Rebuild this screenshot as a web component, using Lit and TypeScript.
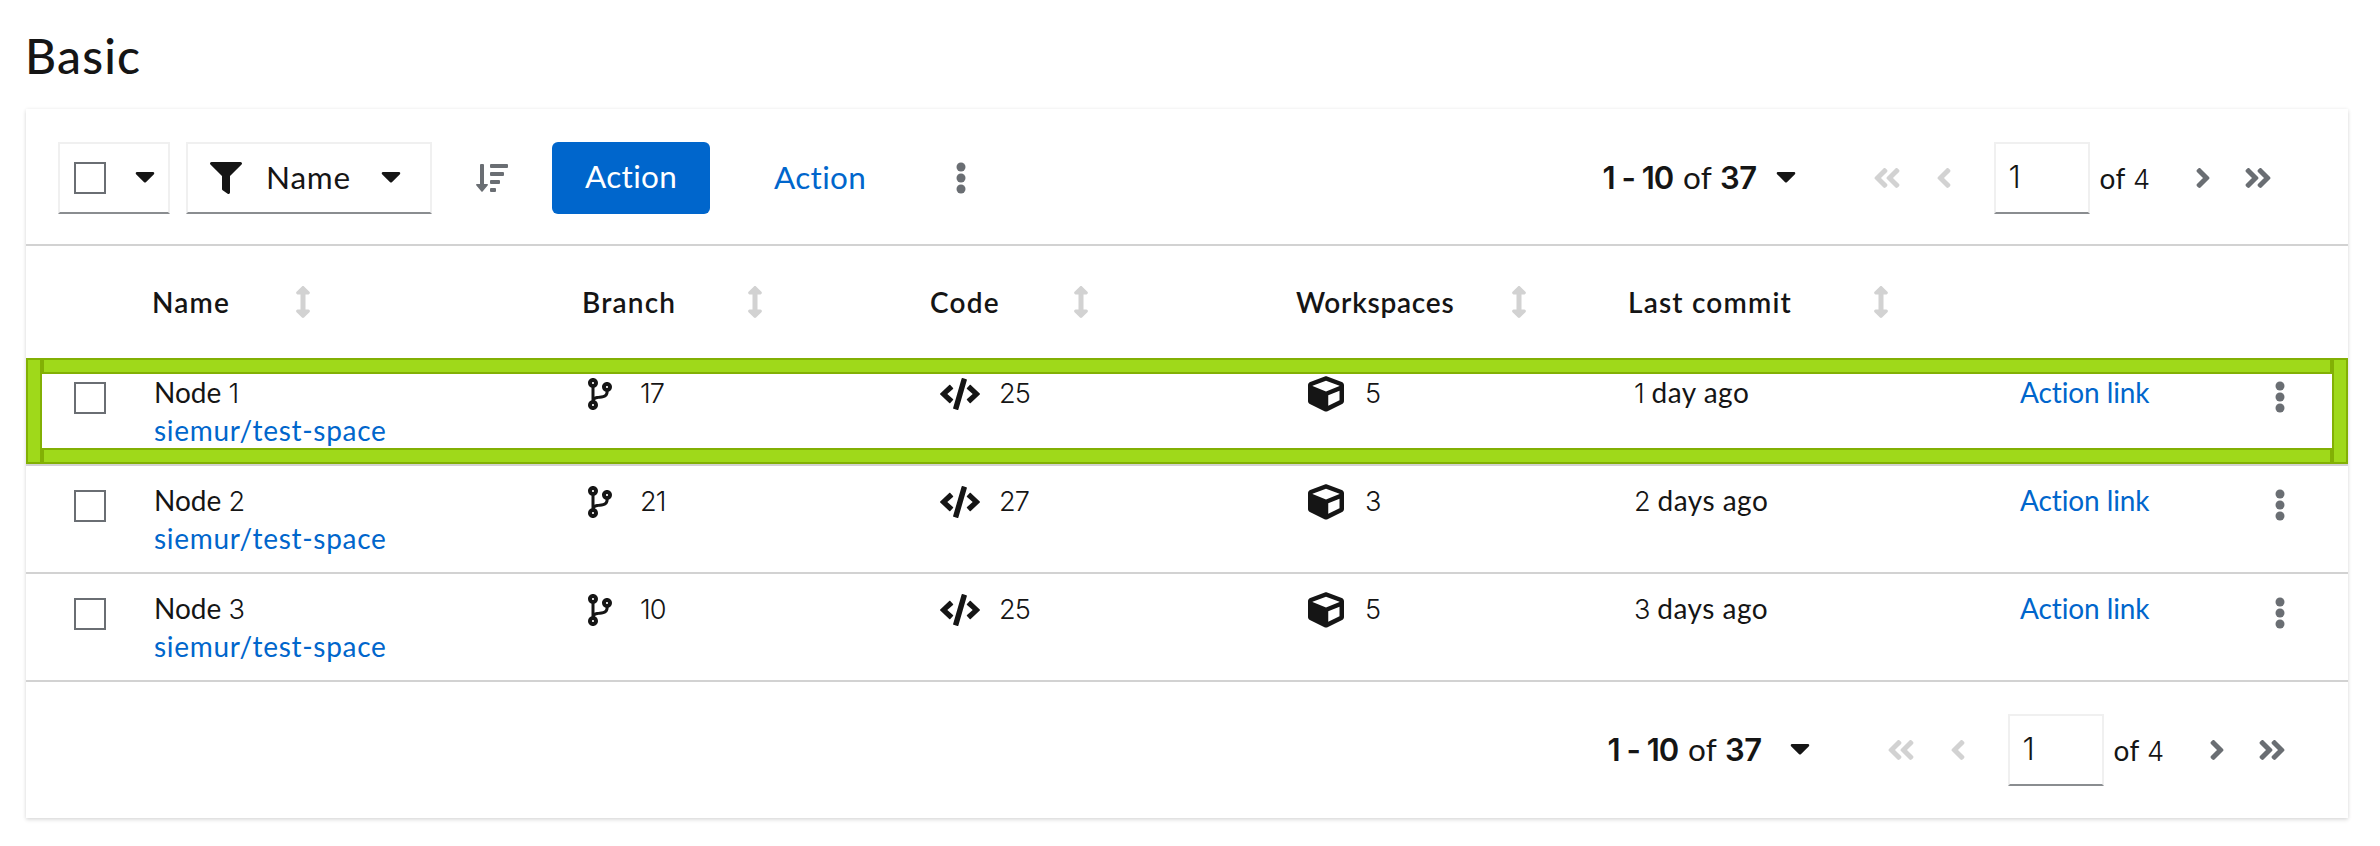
import { LitElement, html, css, svg, nothing } from 'lit';
import { customElement, property } from 'lit/decorators.js';

const ANGLE = 'M31.7 239l136-136c9.4-9.4 24.6-9.4 33.9 0l22.6 22.6c9.4 9.4 9.4 24.6 0 33.9L127.9 256l96.4 96.4c9.4 9.4 9.4 24.6 0 33.9L201.7 409c-9.4 9.4-24.6 9.4-33.9 0l-136-136c-9.5-9.4-9.5-24.6-.1-34z';

const ICONS: Record<string, { w: number; h: number; box: string; body: unknown }> = {
  caret: { w: 20, h: 32, box: '0 0 320 512', body: svg`<path d="M31.3 192h257.3c17.8 0 26.7 21.5 14.1 34.1L174.1 354.8c-7.8 7.8-20.5 7.8-28.3 0L17.2 226.1C4.6 213.5 13.5 192 31.3 192z"/>` },
  filter: { w: 32, h: 32, box: '0 0 512 512', body: svg`<path d="M487.976 0H24.028C2.71 0-8.047 25.866 7.058 40.971L192 225.941V432c0 7.831 3.821 15.17 10.237 19.662l80 55.98C298.02 518.69 320 507.493 320 487.98V225.941l184.947-184.97C520.021 25.896 509.338 0 487.976 0z"/>` },
  amount: { w: 32, h: 28, box: '0 0 32 28', body: svg`<path d="M5 0h2a1 1 0 0 1 1 1v19h3q1.6 0 .6 1.4l-5 6q-.6.8-1.2 0l-5-6q-1-1.4.6-1.4h3V1a1 1 0 0 1 1-1z"/><rect x="14" y="0" width="18" height="4" rx="1"/><rect x="14" y="8" width="14" height="4" rx="1"/><rect x="14" y="16" width="10" height="4" rx="1"/><rect x="14" y="24" width="6" height="4" rx="1"/>` },
  kebab: { w: 12, h: 32, box: '0 0 192 512', body: svg`<circle cx="96" cy="80" r="72"/><circle cx="96" cy="256" r="72"/><circle cx="96" cy="432" r="72"/>` },
  sort: { w: 16, h: 32, box: '0 0 256 512', body: svg`<path d="M214.059 377.941H168V134.059h46.059c21.382 0 32.09-25.851 16.971-40.971L144.971 7.029c-9.373-9.373-24.568-9.373-33.941 0L24.971 93.088c-15.119 15.119-4.411 40.971 16.971 40.971H88v243.882H41.941c-21.382 0-32.09 25.851-16.971 40.971l86.059 86.059c9.373 9.373 24.568 9.373 33.941 0l86.059-86.059c15.12-15.119 4.412-40.971-16.97-40.971z"/>` },
  branch: { w: 24, h: 32, box: '0 0 384 512', body: svg`<path d="M384 144c0-44.2-35.8-80-80-80s-80 35.8-80 80c0 36.4 24.3 67.1 57.5 76.8-.6 16.1-4.2 28.5-11 36.9-15.4 19.2-49.3 22.4-85.2 25.7-28.2 2.6-57.4 5.4-81.3 16.9v-144c32.5-10.2 56-40.5 56-76.3 0-44.2-35.8-80-80-80S0 35.8 0 80c0 35.8 23.5 66.1 56 76.3v199.3C23.5 365.9 0 396.2 0 432c0 44.2 35.8 80 80 80s80-35.8 80-80c0-34-21.2-63.1-51.2-74.6 3.1-5.2 7.8-9.8 14.9-13.4 16.2-8.2 40.4-10.4 66.1-12.8 42.2-3.9 90-8.4 118.2-43.4 14-17.4 21.1-39.8 21.6-67.9 31.6-10.8 54.4-40.7 54.4-75.9zM80 64c8.8 0 16 7.2 16 16s-7.2 16-16 16-16-7.2-16-16 7.2-16 16-16zm0 384c-8.8 0-16-7.2-16-16s7.2-16 16-16 16 7.2 16 16-7.2 16-16 16zm224-320c8.8 0 16 7.2 16 16s-7.2 16-16 16-16-7.2-16-16 7.2-16 16-16z"/>` },
  code: { w: 40, h: 32, box: '0 0 640 512', body: svg`<path d="M278.9 511.5l-61-17.7c-6.4-1.8-10-8.5-8.2-14.9L346.2 8.7c1.8-6.4 8.5-10 14.9-8.2l61 17.7c6.4 1.8 10 8.5 8.2 14.9L293.8 503.3c-1.9 6.4-8.5 10.1-14.9 8.2zm-114-112.2l43.5-46.4c4.6-4.9 4.3-12.7-.8-17.2L117 256l90.6-79.7c5.1-4.5 5.5-12.3.8-17.2l-43.5-46.4c-4.5-4.8-12.1-5.1-17-.5L3.8 247.2c-5.1 4.7-5.1 12.8 0 17.5l144.1 135.1c4.9 4.6 12.5 4.4 17-.5zm327.2.6l144.1-135.1c5.1-4.7 5.1-12.8 0-17.5L492.1 112.1c-4.8-4.5-12.4-4.3-17 .5L431.6 159c-4.6 4.9-4.3 12.7.8 17.2L523 256l-90.6 79.7c-5.1 4.5-5.5 12.3-.8 17.2l43.5 46.4c4.5 4.9 12.1 5.1 17 .6z"/>` },
  cube: { w: 36, h: 36, box: '0 0 512 512', body: svg`<path d="M239.1 6.3l-208 78c-18.7 7-31.1 25-31.1 45v225.1c0 18.2 10.3 34.8 26.5 42.9l208 104c13.5 6.8 29.4 6.8 42.9 0l208-104c16.3-8.1 26.5-24.8 26.5-42.9V129.3c0-20-12.4-37.9-31.1-44.9l-208-78C262 2.2 250 2.2 239.1 6.3zM256 68.4l192 72v1.1l-192 78-192-78v-1.1l192-72zm32 356V275.5l160-65v133.9l-160 80z"/>` },
  left: { w: 16, h: 32, box: '0 0 256 512', body: svg`<path d=${ANGLE}/>` },
  right: { w: 16, h: 32, box: '0 0 256 512', body: svg`<path transform="matrix(-1 0 0 1 256 0)" d=${ANGLE}/>` },
  first: { w: 28, h: 32, box: '0 0 448 512', body: svg`<path d=${ANGLE}/><path transform="translate(192 0)" d=${ANGLE}/>` },
  last: { w: 28, h: 32, box: '0 0 448 512', body: svg`<path transform="matrix(-1 0 0 1 256 0)" d=${ANGLE}/><path transform="matrix(-1 0 0 1 448 0)" d=${ANGLE}/>` },
};

const icon = (name: string) => {
  const i = ICONS[name];
  return html`<svg class="icon ${name}" width=${i.w} height=${i.h} viewBox=${i.box} fill="currentColor" aria-hidden="true">${i.body}</svg>`;
};

/* Figures are set in a face whose "1" has no foot. */
const figures = (text: string) =>
  text.split(/(\d+)/).map(part => (/^\d+$/.test(part) ? html`<span class="num">${part}</span>` : part));

const base = css`
  * { box-sizing: border-box; }
  .icon { display: block; flex: none; }
  .num { font-family: Inter, sans-serif; font-size: 0.97em; font-weight: 300; line-height: 1; letter-spacing: -0.9px; }
`;

@customElement('table-pagination')
export class TablePagination extends LitElement {
  @property({ type: Boolean, reflect: true }) bottom = false;

  static styles = [base, css`
    :host { display: flex; align-items: center; height: 72px; margin-left: auto; margin-right: 76px; }
    :host([bottom]) { margin-right: 62px; }
    .summary { display: flex; align-items: baseline; width: 173px; margin-top: -2px; font-size: 31.5px; line-height: 40px; }
    :host([bottom]) .summary { width: 182px; }
    .range { width: 80.5px; font-weight: 600; white-space: nowrap; font-family: Inter, sans-serif; font-size: 31px; letter-spacing: -1px; }
    .of { width: 37px; letter-spacing: 0.3px; }
    .total { font-weight: 600; font-family: Inter, sans-serif; font-size: 31px; letter-spacing: -0.5px; }
    .caret { position: relative; top: -2px; }
    .nav { color: #6a6e73; }
    .off { color: #d2d2d2; }
    .first { margin-left: 77px; }
    .left { margin-left: 35px; }
    .page {
      display: flex; align-items: center; width: 96px; height: 72px; margin-left: 42px; padding: 0 0 2px 13px;
      border: 2px solid #f0f0f0; border-bottom-color: #8a8d90; font-size: 32px; line-height: 40px;
    }
    .pages { width: 95.5px; margin: -1px 0 0 10px; font-size: 28px; letter-spacing: 0.5px; line-height: 40px; }
    .last { margin-left: 33px; }
    .group { display: flex; align-items: center; }
  `];

  render() {
    return html`
      <div class="summary"><span class="range">1 - 10</span><span class="of">of</span><span class="total">37</span></div>
      ${icon('caret')}
      <div class="group off">${icon('first')}${icon('left')}</div>
      <div class="page">${figures('1')}</div>
      <div class="pages">${figures('of 4')}</div>
      <div class="group nav">${icon('right')}${icon('last')}</div>
    `;
  }
}

const COLUMNS = [
  { key: 'name', label: 'Name' },
  { key: 'branches', label: 'Branch' },
  { key: 'codes', label: 'Code' },
  { key: 'workspaces', label: 'Workspaces' },
  { key: 'commit', label: 'Last commit' },
];

const ROWS = [
  { name: 'Node 1', branches: '17', code: '25', workspaces: '5', commit: '1 day ago', focused: true },
  { name: 'Node 2', branches: '21', code: '27', workspaces: '3', commit: '2 days ago', focused: false },
  { name: 'Node 3', branches: '10', code: '25', workspaces: '5', commit: '3 days ago', focused: false },
];

@customElement('app-root')
export class AppRoot extends LitElement {
  static styles = [base, css`
    :host {
      display: block; box-sizing: border-box; height: 846px; padding: 24px 32px 0 26px; overflow: hidden; background: #fff; color: #151515;
      font-family: Lato, "Open Sans", sans-serif; font-size: 28px; font-variant-ligatures: none;
    }
    h1 { margin: 0 0 0 -1px; height: 85px; font-size: 48px; font-weight: 500; line-height: 64px; letter-spacing: 1.2px; }
    .card { height: 709px; background: #fff; box-shadow: 0 2px 4px rgba(3, 3, 3, 0.12), 0 0 4px rgba(3, 3, 3, 0.06); }
    .toolbar { display: flex; align-items: flex-start; height: 137px; padding: 33px 0 0 32px; border-bottom: 2px solid #d2d2d2; }
    .footer { height: 136px; padding-top: 32px; border-bottom: 0; }
    .tools { display: flex; align-items: center; height: 72px; font-size: 31.5px; line-height: 40px; }
    .box { display: flex; align-items: center; height: 72px; border: 2px solid #f0f0f0; border-bottom-color: #8a8d90; }
    .box .caret { position: relative; top: -2px; }
    .check { width: 32px; height: 32px; border: 2px solid #6a6e73; background: #fff; }
    .split { width: 112px; padding-left: 14px; }
    .split .caret { margin-left: 29px; }
    .menu { width: 246px; margin-left: 16px; padding-left: 22px; letter-spacing: 0.8px; }
    .menu .name { width: 115px; margin: -2px 0 0 24px; }
    .muted { color: #6a6e73; }
    .amount { margin-left: 44px; }
    .primary { width: 158px; height: 72px; margin-left: 44px; padding-left: 33px; border-radius: 6px; background: #06c; color: #fff; line-height: 69px; letter-spacing: 0.3px; }
    .plain { width: 181px; margin: -2px 0 0 64px; color: #06c; letter-spacing: 0.3px; }
    .row { display: grid; grid-template-columns: 128px 430px 348px 366px 332px 392px 248px 1fr; }
    .head { height: 112px; padding-top: 39px; font-weight: 600; letter-spacing: 1.2px; line-height: 34px; }
    .head .label { display: flex; margin-left: -2px; }
    .head .label > span { white-space: nowrap; }
    .head .icon { margin-top: 1px; color: #d2d2d2; }
    .head .name { width: 143px; }
    .head .branches { width: 165px; }
    .head .codes { width: 143px; }
    .head .workspaces { width: 215px; letter-spacing: 0.75px; }
    .head .commit { width: 245px; }
    .body { position: relative; height: 108px; padding-top: 15px; border-bottom: 2px solid #d2d2d2; line-height: 38px; }
    .body .check { margin: 9px 0 0 48px; }
    .path { color: #06c; letter-spacing: 0.7px; }
    .count { display: flex; }
    .count .branch { margin: 5px 28px 0 4px; }
    .count .code { margin: 5px 19px 0 8px; }
    .count .cube { margin: 3px 21px 0 10px; }
    .when { padding-left: 4px; letter-spacing: 0.5px; }
    .link { margin-left: -2px; color: #06c; letter-spacing: -0.1px; }
    .body .kebab { margin: 8px 0 0 4px; color: #6a6e73; }
    .ring { position: absolute; inset: 0; display: grid; grid-template-columns: 16px 1fr 16px; grid-template-rows: 16px 1fr 16px; }
    .ring i { border: 2px solid #82b004; background: #9fd91a; }
    .ring .side { grid-row: 1 / 4; }
    .ring .start { grid-column: 1; }
    .ring .end { grid-column: 3; }
    .ring .top { grid-area: 1 / 2; }
    .ring .low { grid-area: 3 / 2; }
  `];

  render() {
    return html`
      <h1>Basic</h1>
      <section class="card">
        <div class="toolbar">
          <div class="tools">
            <div class="box split"><div class="check"></div>${icon('caret')}</div>
            <div class="box menu">${icon('filter')}<span class="name">Name</span>${icon('caret')}</div>
            <span class="muted">${icon('amount')}</span>
            <div class="primary">Action</div>
            <div class="plain">Action</div>
            <span class="muted">${icon('kebab')}</span>
          </div>
          <table-pagination></table-pagination>
        </div>
        <div class="row head">
          <div></div>
          ${COLUMNS.map(c => html`<div class="label"><span class=${c.key}>${c.label}</span>${icon('sort')}</div>`)}
        </div>
        ${ROWS.map(r => html`
          <div class="row body">
            <div class="check"></div>
            <div><div>${figures(r.name)}</div><div class="path">siemur/test-space</div></div>
            <div class="count">${icon('branch')}<div>${figures(r.branches)}</div></div>
            <div class="count">${icon('code')}<div>${figures(r.code)}</div></div>
            <div class="count">${icon('cube')}<div>${figures(r.workspaces)}</div></div>
            <div class="when">${figures(r.commit)}</div>
            <div class="link">Action link</div>
            ${icon('kebab')}
            ${r.focused ? html`<div class="ring"><i class="side start"></i><i class="top"></i><i class="low"></i><i class="side end"></i></div>` : nothing}
          </div>`)}
        <div class="toolbar footer"><table-pagination bottom></table-pagination></div>
      </section>
    `;
  }
}
